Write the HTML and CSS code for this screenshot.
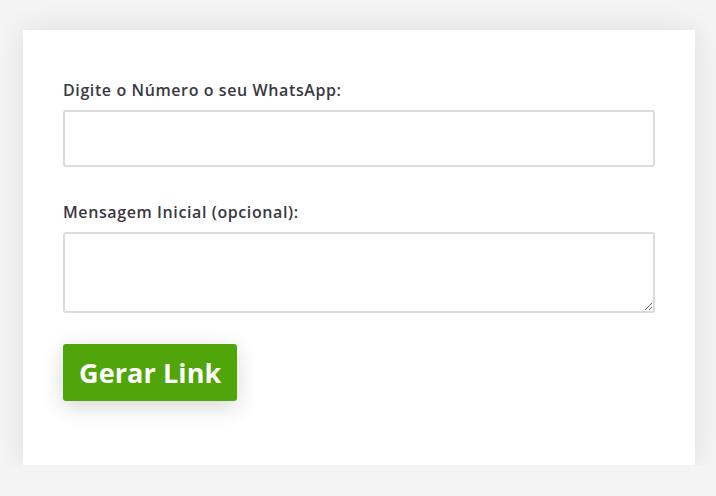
FILE: index.html
```html
<!DOCTYPE html>
<html lang="pt">
<head>
<meta charset="utf-8">
<title>Gerar Link WhatsApp</title>
<link rel="stylesheet" href="styles.css">
</head>
<body>
<div class="card">
  <form class="form">
    <div class="field">
      <label class="label" for="numero">Digite o Número o seu WhatsApp:</label>
      <input class="input" id="numero" type="text">
    </div>
    <div class="field">
      <label class="label" for="mensagem">Mensagem Inicial (opcional):</label>
      <textarea class="textarea" id="mensagem"></textarea>
    </div>
    <div class="actions">
      <button class="button" type="button">Gerar Link</button>
    </div>
  </form>
</div>
</body>
</html>
```
FILE: styles.css
```css
html, body {
  margin: 0;
  padding: 0;
  background: #f4f4f4;
}
body {
  padding-top: 30px;
  font-family: "Open Sans", "DejaVu Sans", sans-serif;
}
.card {
  width: 672px;
  box-sizing: border-box;
  margin: 0 21px 0 23px;
  background: #fff;
  padding: 49px 40px 64px;
  box-shadow: 0 0 28px rgba(0, 0, 0, 0.09);
}
.form {
  display: flex;
  flex-direction: column;
}
.field {
  display: flex;
  flex-direction: column;
}
.field + .field {
  margin-top: 34px;
}
.label {
  font-size: 16px;
  font-weight: 600;
  line-height: 22px;
  color: #3a393f;
  letter-spacing: 0.6px;
  margin-bottom: 9px;
}
.input, .textarea {
  box-sizing: border-box;
  width: 100%;
  border: 2px solid #dcdcdc;
  border-radius: 3px;
  background: #fff;
  margin: 0;
  font: inherit;
}
.input {
  height: 57px;
}
.textarea {
  height: 81px;
  display: block;
  resize: vertical;
}
.actions {
  margin-top: 31px;
  display: flex;
}
.button {
  height: 57px;
  padding: 0 16px 0 16px;
  background: #50a50a;
  color: #fff;
  border: none;
  border-radius: 3px;
  font-family: "Open Sans", "DejaVu Sans", sans-serif;
  font-size: 27px;
  font-weight: 700;
  letter-spacing: 0.1px;
  box-shadow: 0 6px 22px rgba(0, 0, 0, 0.16);
  cursor: pointer;
}
```
